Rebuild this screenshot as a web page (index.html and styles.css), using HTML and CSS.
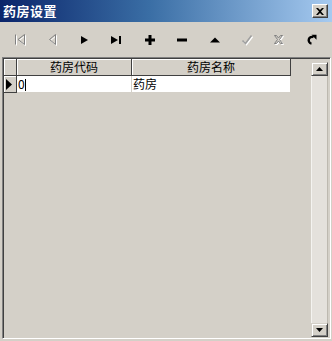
FILE: index.html
```html
<!DOCTYPE html>
<html lang="zh-CN">
  <head>
    <meta charset="UTF-8" />
    <title>药房设置</title>
    <link rel="stylesheet" href="styles.css">
  </head>
  <body>
    <div class="window">
      <div class="titlebar">
        <span class="title">药房设置</span>
        <button class="close-btn">
          <svg width="8" height="7" viewBox="0 0 8 7"><path d="M0 0h2l2 2 2-2h2L5 3.5 8 7H6L4 5 2 7H0l3-3.5z" fill="#000"/></svg>
        </button>
      </div>

      <div class="toolbar">
        <div class="tool disabled">
          <svg width="12" height="12" viewBox="0 0 12 12">
            <g fill="none" stroke="#fff" transform="translate(1 1)"><path d="M1.5 0.5v10"/><path d="M10.5 0.5v10L4 5.5z"/></g>
            <g fill="none" stroke="#808080"><path d="M1.5 0.5v10"/><path d="M10.5 0.5v10L4 5.5z"/></g>
          </svg>
        </div>
        <div class="tool disabled">
          <svg width="11" height="12" viewBox="0 0 11 12">
            <path d="M8.5 0.5v10L2.5 5.5z" fill="none" stroke="#fff" transform="translate(1 1)"/>
            <path d="M8.5 0.5v10L2.5 5.5z" fill="none" stroke="#808080"/>
          </svg>
        </div>
        <div class="tool">
          <svg width="9" height="10" viewBox="0 0 9 10"><path d="M1 1l7 4-7 4z" fill="#000"/></svg>
        </div>
        <div class="tool">
          <svg width="12" height="10" viewBox="0 0 12 10"><path d="M0 1l7 4-7 4z" fill="#000"/><rect x="8" y="1" width="2" height="8" fill="#000"/></svg>
        </div>
        <div class="tool">
          <svg width="10" height="10" viewBox="0 0 10 10"><path d="M3.5 0h3v3.5H10v3H6.5V10h-3V6.5H0v-3h3.5z" fill="#000"/></svg>
        </div>
        <div class="tool">
          <svg width="10" height="10" viewBox="0 0 10 10"><rect x="0" y="3.5" width="10" height="3" fill="#000"/></svg>
        </div>
        <div class="tool">
          <svg width="10" height="10" viewBox="0 0 10 10"><path d="M5 2.5l5 5H0z" fill="#000"/></svg>
        </div>
        <div class="tool disabled">
          <svg width="12" height="12" viewBox="0 0 12 12">
            <path d="M1.5 6.5l3 3 6-8" fill="none" stroke="#fff" stroke-width="1.6" transform="translate(1 1)"/>
            <path d="M1.5 6.5l3 3 6-8" fill="none" stroke="#a0a0a0" stroke-width="1.6"/>
          </svg>
        </div>
        <div class="tool disabled">
          <svg width="12" height="12" viewBox="0 0 12 12">
            <path d="M1.5 1.5h2l2 2.5 2-2.5h2l-3 4 3 4h-2l-2-2.5-2 2.5h-2l3-4z" fill="#fff" stroke="#fff" transform="translate(1 1)"/>
            <path d="M1.5 1.5h2l2 2.5 2-2.5h2l-3 4 3 4h-2l-2-2.5-2 2.5h-2l3-4z" fill="#d4d0c8" stroke="#808080"/>
          </svg>
        </div>
        <div class="tool">
          <svg width="11" height="11" viewBox="0 0 11 11">
            <path d="M7.6 3.2A3.4 3.4 0 1 0 5.5 9.6" fill="none" stroke="#000" stroke-width="2.4"/>
            <path d="M5.5 0.8h5v5z" fill="#000"/>
          </svg>
        </div>
      </div>

      <div class="grid-frame">
        <div class="grid-body">
          <div class="grid-row header-row">
            <div class="cell indicator head"></div>
            <div class="cell col-code head">药房代码</div>
            <div class="cell col-name head">药房名称</div>
          </div>
          <div class="grid-row data-row">
            <div class="cell indicator head">
              <svg width="6" height="11" viewBox="0 0 6 11"><path d="M0 0l6 5.5L0 11z" fill="#000"/></svg>
            </div>
            <div class="cell col-code data">0<span class="caret"></span></div>
            <div class="cell col-name data">药房</div>
          </div>
        </div>
        <div class="scrollbar">
          <div class="scroll-btn">
            <svg width="7" height="4" viewBox="0 0 7 4"><path d="M3.5 0L7 4H0z" fill="#000"/></svg>
          </div>
          <div class="scroll-track"></div>
          <div class="scroll-btn">
            <svg width="7" height="4" viewBox="0 0 7 4"><path d="M0 0h7L3.5 4z" fill="#000"/></svg>
          </div>
        </div>
      </div>
    </div>
  </body>
</html>
```

FILE: styles.css
```css
html,
body {
  margin: 0;
  padding: 0;
}
body {
  background: #d4d0c8;
  font-family: "Noto Sans CJK SC", "DejaVu Sans", sans-serif;
  font-size: 12px;
  color: #000;
}
.window {
  width: 332px;
  height: 341px;
  display: flex;
  flex-direction: column;
  box-sizing: border-box;
  background: #d4d0c8;
}
.titlebar {
  height: 22px;
  display: flex;
  align-items: center;
  justify-content: space-between;
  padding: 0 4px 0 3px;
  background: linear-gradient(to right, #0a246a, #3a6ea5 45%, #a6caf0);
}
.title {
  color: #fff;
  font-weight: bold;
  font-size: 13px;
  line-height: 14px;
  letter-spacing: 0.5px;
}
.close-btn {
  width: 16px;
  height: 14px;
  padding: 0;
  display: flex;
  align-items: center;
  justify-content: center;
  background: #d4d0c8;
  border: 1px solid;
  border-color: #fff #404040 #404040 #fff;
  box-shadow: inset -1px -1px 0 #808080;
}
.toolbar {
  height: 35px;
  display: grid;
  grid-template-columns: repeat(10, 32.4px);
  padding-left: 4px;
  align-items: center;
}
.tool {
  display: flex;
  justify-content: center;
  align-items: center;
  height: 20px;
}
.grid-frame {
  flex: 1;
  display: flex;
  margin: 0 1px 2px 2px;
  border: 1px solid;
  border-color: #808080 #fff #fff #808080;
  box-shadow: inset 1px 1px 0 #404040, inset -1px -1px 0 #d4d0c8;
  padding: 1px 2px 1px 1px;
}
.grid-body {
  flex: 1;
}
.grid-row {
  display: flex;
}
.cell {
  box-sizing: border-box;
  height: 17px;
  line-height: 16px;
  white-space: nowrap;
}
.head {
  background: #d4d0c8;
  border-right: 1px solid #404040;
  border-bottom: 1px solid #404040;
  box-shadow: inset 1px 1px 0 #fff;
  text-align: center;
}
.indicator {
  width: 13px;
  display: flex;
  align-items: center;
  justify-content: center;
}
.data-row .indicator {
  justify-content: flex-start;
  padding-left: 2px;
}
.col-code {
  width: 115px;
}
.col-name {
  width: 159px;
}
.data {
  background: #fff;
  border-right: 1px solid #d4d0c8;
  border-bottom: 1px solid #d4d0c8;
  padding-left: 1px;
}
.caret {
  display: inline-block;
  width: 1px;
  height: 12px;
  background: #000;
  vertical-align: -2px;
}
.scrollbar {
  width: 17px;
  display: flex;
  flex-direction: column;
  padding-top: 3px;
}
.scroll-btn {
  height: 14px;
  box-sizing: border-box;
  display: flex;
  align-items: center;
  justify-content: center;
  background: #d4d0c8;
  border: 1px solid;
  border-color: #d4d0c8 #404040 #404040 #d4d0c8;
  box-shadow: inset 1px 1px 0 #fff, inset -1px -1px 0 #808080;
}
.scroll-track {
  flex: 1;
  background: #e4e1dc;
  border-left: 1px solid #f4f3f0;
  border-right: 1px solid #bdb9b0;
}
```
